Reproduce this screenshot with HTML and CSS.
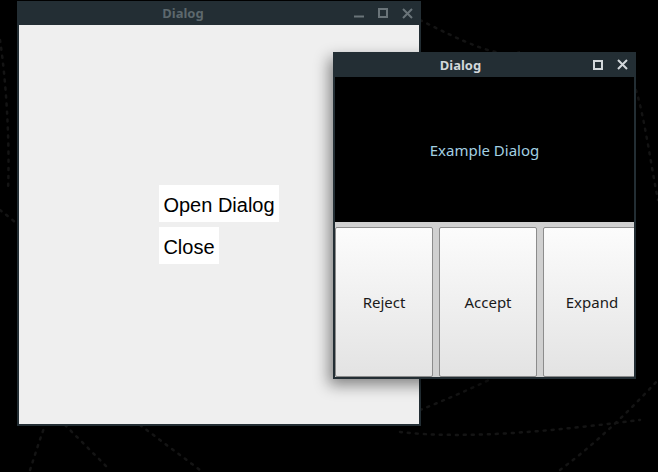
FILE: index.html
```html
<!DOCTYPE html>
<html>
<head>
<meta charset="utf-8">
<link rel="stylesheet" href="styles.css">
</head>
<body>
<div class="desktop">
  <svg class="wallpaper" width="658" height="472" viewBox="0 0 658 472">
    <g fill="none" stroke="#141414" stroke-width="2.5" stroke-linecap="round" stroke-dasharray="2 6">
      <path d="M0 210 C 40 240, 90 300, 140 320"/>
      <path d="M30 470 C 40 440, 45 420, 60 395"/>
      <path d="M65 425 C 80 440, 95 455, 110 470"/>
      <path d="M140 425 C 160 440, 180 455, 200 470"/>
      <path d="M420 410 C 470 390, 540 360, 600 310"/>
      <path d="M400 432 C 470 440, 560 430, 640 420"/>
      <path d="M560 470 C 600 440, 630 410, 658 380"/>
      <path d="M420 20 C 460 40, 500 60, 520 52"/>
      <path d="M0 40 C 6 80, 10 140, 8 190"/>
      <path d="M636 90 C 645 120, 650 160, 658 200"/>
    </g>
  </svg>

  <div class="window win-main">
    <div class="titlebar inactive">
      <div class="title">Dialog</div>
      <div class="controls">
        <span class="ctl"><svg width="10" height="10" viewBox="0 0 10 10"><rect x="0" y="7.5" width="10" height="2" fill="currentColor"/></svg></span>
        <span class="ctl"><svg width="10" height="10" viewBox="0 0 10 10"><rect x="1" y="1" width="8" height="8" fill="none" stroke="currentColor" stroke-width="2"/></svg></span>
        <span class="ctl"><svg width="11" height="11" viewBox="0 0 11 11"><path d="M1 1 L10 10 M10 1 L1 10" stroke="currentColor" stroke-width="2"/></svg></span>
      </div>
    </div>
    <div class="main-content">
      <div class="stack">
        <div class="plain-btn">Open Dialog</div>
        <div class="plain-btn">Close</div>
      </div>
    </div>
  </div>

  <div class="window win-dialog">
    <div class="titlebar active">
      <div class="title">Dialog</div>
      <div class="controls">
        <span class="ctl"><svg width="10" height="10" viewBox="0 0 10 10"><rect x="1" y="1" width="8" height="8" fill="none" stroke="currentColor" stroke-width="2"/></svg></span>
        <span class="ctl"><svg width="11" height="11" viewBox="0 0 11 11"><path d="M1 1 L10 10 M10 1 L1 10" stroke="currentColor" stroke-width="2"/></svg></span>
      </div>
    </div>
    <div class="dialog-body">
      <div class="message">Example Dialog</div>
      <div class="button-row">
        <div class="push">Reject</div>
        <div class="push">Accept</div>
        <div class="push">Expand</div>
      </div>
    </div>
  </div>
</div>
</body>
</html>
```
FILE: styles.css
```css
html, body {
  margin: 0;
  padding: 0;
  background: #000;
}
.desktop {
  position: relative;
  width: 658px;
  height: 472px;
  overflow: hidden;
  background: #000;
}
.wallpaper {
  position: absolute;
  left: 0;
  top: 0;
}
.window {
  position: absolute;
  display: flex;
  flex-direction: column;
  background: #232e34;
  box-sizing: border-box;
  padding: 0 2px 2px 2px;
}
.win-main {
  left: 17px;
  top: 1px;
  width: 404px;
  height: 425px;
}
.win-dialog {
  left: 333px;
  top: 52px;
  width: 303px;
  height: 327px;
  box-shadow: -4px 6px 14px rgba(0, 0, 0, 0.45);
}
.titlebar {
  display: flex;
  align-items: center;
  flex: none;
  font-family: "Noto Sans", sans-serif;
  font-weight: bold;
  font-size: 13px;
}
.win-main .titlebar { height: 24px; }
.win-dialog .titlebar { height: 25px; }
.titlebar.inactive { color: #5d686d; }
.titlebar.active { color: #d2d7da; }
.title {
  flex: 1;
  text-align: center;
}
.controls {
  display: flex;
}
.ctl {
  width: 24px;
  height: 20px;
  display: flex;
  align-items: center;
  justify-content: center;
}
.inactive .ctl { color: #6a7479; }
.active .ctl { color: #d2d7da; }
.main-content {
  flex: 1;
  background: #efefef;
  display: flex;
  align-items: center;
  justify-content: center;
}
.stack {
  display: flex;
  flex-direction: column;
  align-items: flex-start;
  gap: 5px;
}
.plain-btn {
  background: #fff;
  font-family: "Liberation Sans", Arial, sans-serif;
  font-size: 20px;
  line-height: 23px;
  padding: 9px 4px 5px 4px;
  color: #000;
}
.dialog-body {
  flex: 1;
  display: flex;
  flex-direction: column;
  overflow: hidden;
  background: #d2d2d2;
}
.message {
  height: 145px;
  flex: none;
  background: #000;
  color: #a3d0e2;
  font-family: "Noto Sans", sans-serif;
  font-size: 15px;
  display: flex;
  align-items: center;
  justify-content: center;
}
.button-row {
  flex: 1;
  display: flex;
  gap: 6px;
  padding-top: 5px;
  background: #d0d0d0;
}
.push {
  flex: none;
  width: 98px;
  box-sizing: border-box;
  border: 1px solid #8c8c8c;
  border-radius: 2px;
  background: linear-gradient(#fcfcfc, #e3e3e3);
  display: flex;
  align-items: center;
  justify-content: center;
  font-family: "Noto Sans", sans-serif;
  font-size: 15px;
  color: #1a1a1a;
}
```
